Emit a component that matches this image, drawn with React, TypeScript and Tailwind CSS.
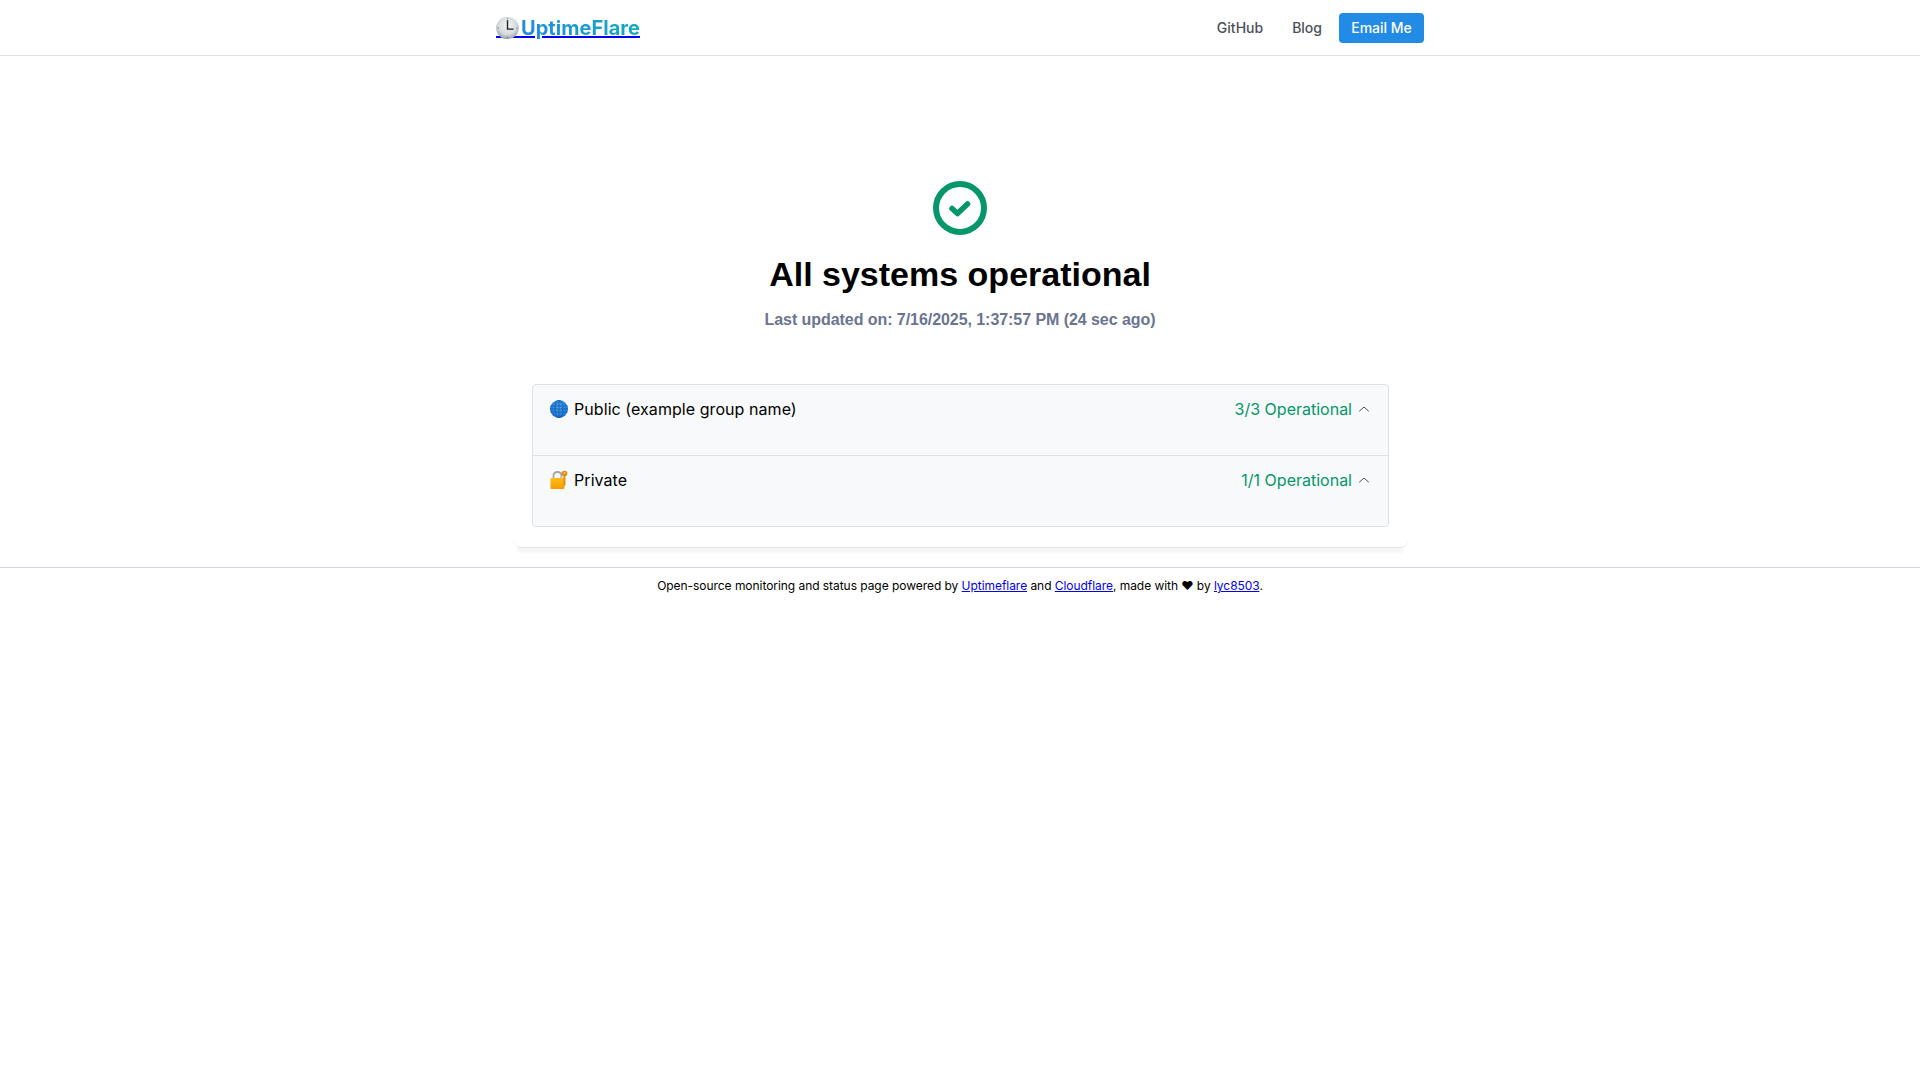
function ClockIcon() {
  return (
    <svg className="absolute top-1/2 left-0 -translate-y-1/2" width="23" height="23" viewBox="0 0 21 21">
      <defs>
        <radialGradient id="clockFace" cx="50%" cy="38%" r="62%">
          <stop offset="0%" stopColor="#f4f6f7" />
          <stop offset="65%" stopColor="#d5dadd" />
          <stop offset="100%" stopColor="#969fa6" />
        </radialGradient>
      </defs>
      <circle cx="10.5" cy="10.5" r="10.3" fill="url(#clockFace)" />
      <path d="M10.5 3.5 V11.5 H16" stroke="#1f2326" strokeWidth="1.3" fill="none" />
      <path d="M10.5 1.5V2.5M10.5 18.5V19.5M1.5 10.5H2.5M18.5 10.5H19.5" stroke="#5f666c" strokeWidth="0.8" />
    </svg>
  );
}

function GlobeIcon() {
  return (
    <svg className="absolute top-1/2 left-0 -translate-y-1/2" width="18" height="18" viewBox="0 0 18 18">
      <defs>
        <radialGradient id="globeFill" cx="50%" cy="40%" r="65%">
          <stop offset="0%" stopColor="#4aa3ec" />
          <stop offset="70%" stopColor="#2280dc" />
          <stop offset="100%" stopColor="#0f56ad" />
        </radialGradient>
      </defs>
      <circle cx="9" cy="9" r="9" fill="url(#globeFill)" />
      <g stroke="#0d4f9f" strokeWidth="0.7" fill="none" opacity="0.9">
        <ellipse cx="9" cy="9" rx="4" ry="9" />
        <path d="M9 0V18M0.5 6H17.5M0.5 12H17.5M0 9H18" />
      </g>
    </svg>
  );
}

function LockIcon() {
  return (
    <svg className="absolute top-1/2 left-0 -translate-y-1/2" width="18" height="19" viewBox="0 0 18 19">
      <defs>
        <linearGradient id="lockBody" x1="0" y1="0" x2="0" y2="1">
          <stop offset="0%" stopColor="#ffbe1a" />
          <stop offset="100%" stopColor="#f79a00" />
        </linearGradient>
      </defs>
      <path d="M3.5 8V5.5C3.5 2.8 5.3 1.5 7.5 1.5S11.5 2.8 11.5 5.5V8" fill="none" stroke="#a8a8a5" strokeWidth="1.8" />
      <rect x="0.5" y="7.5" width="14" height="11" rx="1" fill="url(#lockBody)" />
      <circle cx="14.5" cy="3" r="2.8" fill="#e8860c" />
      <circle cx="14.5" cy="2.7" r="0.9" fill="#ffe2a8" />
      <rect x="13.6" y="5" width="1.8" height="10" fill="#e8860c" />
    </svg>
  );
}

function Chevron() {
  return (
    <svg className="ml-[6px]" width="12" height="12" viewBox="0 0 24 24" fill="none" stroke="#495057" strokeWidth="2" strokeLinecap="round" strokeLinejoin="round">
      <path d="M3 16 L12 8 L21 16" />
    </svg>
  );
}

export default function App() {
  return (
    <div className="min-h-screen bg-white text-black [font-family:Inter,'Noto_Color_Emoji',sans-serif]">
      <header className="h-[56px] border-b border-[#dee2e6]">
        <div className="mx-auto flex h-[55px] w-[960px] items-center justify-between px-4">
          <a href="#" className="text-[20px] leading-[30px] font-bold tracking-[0.05px] text-[#0000ee] underline">
            <span className="relative text-transparent">🕒<ClockIcon /></span>
            <span className="bg-gradient-to-r from-[#228be6] to-[#15aabf] bg-clip-text text-transparent">UptimeFlare</span>
          </a>
          <nav className="flex items-center">
            <a className="mr-[5px] px-[12px] py-2 text-sm leading-[20px] font-medium text-[#495057]">GitHub</a>
            <a className="px-[12px] py-2 text-sm leading-[20px] font-medium text-[#495057]">Blog</a>
            <a className="ml-[5px] flex h-[30px] w-[85px] items-center justify-center rounded-[4px] bg-[#228be6] text-sm font-medium text-white">Email Me</a>
          </nav>
        </div>
      </header>

      <main className="flex flex-col items-center pt-[124px]">
        <svg width="56" height="56" viewBox="0 0 56 56" fill="none">
          <circle cx="28" cy="28" r="24" stroke="#059669" strokeWidth="6" />
          <path d="M20 28.5 L25.5 33.5 L35.5 24" stroke="#059669" strokeWidth="5.5" strokeLinecap="round" strokeLinejoin="round" />
        </svg>
        <h1 className="mt-[16px] text-[34px] leading-[44px] font-bold text-black [font-family:'Liberation_Sans',sans-serif]">All systems operational</h1>
        <p className="mt-[13px] text-[16px] leading-[22px] font-bold tracking-[-0.06px] text-[#6b7491] [font-family:'Liberation_Sans',sans-serif]">
          Last updated on: 7/16/2025, 1:37:57 PM (24 sec ago)
        </p>

        <section className="mt-[53px] w-[895px] rounded-[8px] bg-white px-[19px] pb-[20px] shadow-[0_1px_1px_rgba(0,0,0,0.07),0_10px_2px_-4px_rgba(0,0,0,0.035)]">
          <div className="rounded-[4px] border border-[#dee2e6] bg-[#f8f9fa]">
            <div className="flex h-[71px] justify-between border-b border-[#dee2e6] pt-[12px] pr-[17.5px] pl-[17px] text-[16px] leading-[24px]">
              <div className="tracking-[0.06px]">
                <span className="relative text-transparent">🌐<GlobeIcon /></span> Public (example group name)
              </div>
              <div className="flex items-center self-start">
                <span className="text-[#059669]">3/3 Operational</span>
                <Chevron />
              </div>
            </div>
            <div className="flex h-[70px] justify-between pt-[12px] pr-[17.5px] pl-[17px] text-[16px] leading-[24px]">
              <div className="tracking-[0.06px]">
                <span className="relative text-transparent">🔐<LockIcon /></span> Private
              </div>
              <div className="flex items-center self-start">
                <span className="text-[#059669]">1/1 Operational</span>
                <Chevron />
              </div>
            </div>
          </div>
        </section>
      </main>

      <footer className="mt-[20px] border-t border-[#ced4da] pt-[9px] text-center text-[12px] leading-[18px] font-normal tracking-[-0.05px]">
        Open-source monitoring and status page powered by{" "}
        <a href="#" className="text-[#0000ee] underline">Uptimeflare</a> and{" "}
        <a href="#" className="text-[#0000ee] underline">Cloudflare</a>, made with ❤ by{" "}
        <a href="#" className="text-[#0000ee] underline">lyc8503</a>.
      </footer>
    </div>
  );
}
